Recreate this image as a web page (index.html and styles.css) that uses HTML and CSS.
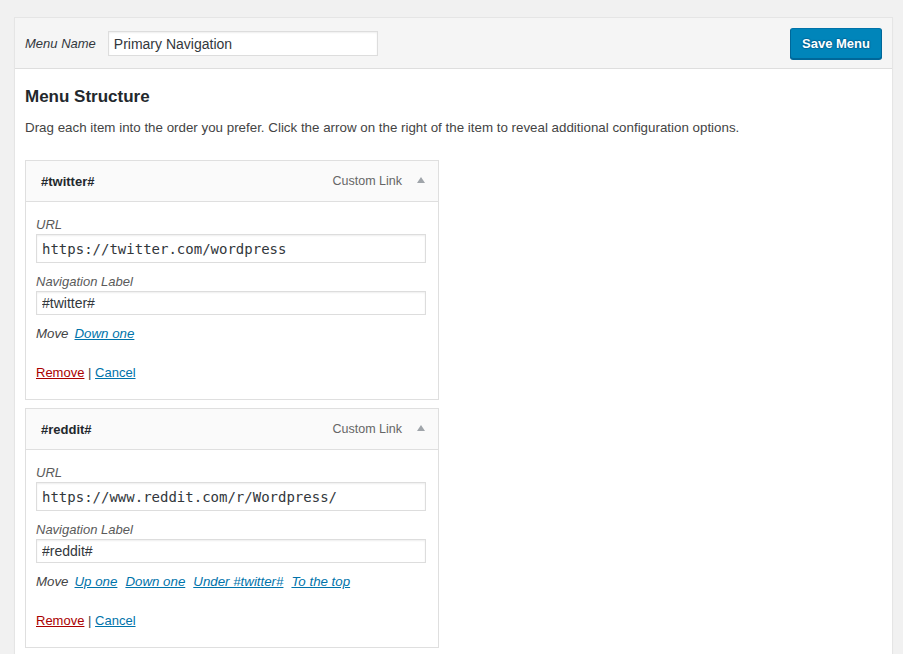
FILE: index.html
```html
<!DOCTYPE html>
<html>
<head>
<meta charset="utf-8">
<link rel="stylesheet" href="styles.css">
</head>
<body>
<div class="menu-edit">
  <div class="menu-header">
    <label class="menu-name-label">Menu Name</label>
    <input class="menu-name-input" type="text" value="Primary Navigation">
    <button class="save-btn">Save Menu</button>
  </div>
  <div class="menu-body">
    <h3 class="structure-title">Menu Structure</h3>
    <p class="structure-desc">Drag each item into the order you prefer. Click the arrow on the right of the item to reveal additional configuration options.</p>

    <div class="menu-item">
      <div class="item-bar">
        <span class="item-title">#twitter#</span>
        <span class="item-type">Custom Link</span>
        <span class="item-arrow"></span>
      </div>
      <div class="item-settings">
        <label class="field-label">URL</label>
        <input class="field-input url" type="text" value="https://twitter.com/wordpress">
        <label class="field-label spaced">Navigation Label</label>
        <input class="field-input label" type="text" value="#twitter#">
        <div class="move-row"><span class="move-label">Move</span><a href="#" class="move-link">Down one</a></div>
        <div class="actions"><a href="#" class="remove">Remove</a> <span class="sep">|</span> <a href="#" class="cancel">Cancel</a></div>
      </div>
    </div>

    <div class="menu-item">
      <div class="item-bar">
        <span class="item-title">#reddit#</span>
        <span class="item-type">Custom Link</span>
        <span class="item-arrow"></span>
      </div>
      <div class="item-settings">
        <label class="field-label">URL</label>
        <input class="field-input url" type="text" value="https://www.reddit.com/r/Wordpress/">
        <label class="field-label spaced">Navigation Label</label>
        <input class="field-input label" type="text" value="#reddit#">
        <div class="move-row"><span class="move-label">Move</span><a href="#" class="move-link">Up one</a><a href="#" class="move-link">Down one</a><a href="#" class="move-link">Under #twitter#</a><a href="#" class="move-link">To the top</a></div>
        <div class="actions"><a href="#" class="remove">Remove</a> <span class="sep">|</span> <a href="#" class="cancel">Cancel</a></div>
      </div>
    </div>
  </div>
</div>
</body>
</html>
```

FILE: styles.css
```css
html, body {
  margin: 0;
  padding: 0;
}
body {
  background: #f1f1f1;
  font-family: "Liberation Sans", Arial, sans-serif;
  font-size: 13px;
  color: #444;
  padding: 17px 10px 40px 14px;
}
.menu-edit {
  border: 1px solid #e5e5e5;
  background: #fff;
  box-shadow: 0 1px 1px rgba(0,0,0,.04);
}
.menu-header {
  display: flex;
  align-items: center;
  background: #f5f5f5;
  border-bottom: 1px solid #dedede;
  padding: 10px 10px 9px 10px;
}
.menu-name-label {
  font-style: italic;
  color: #32373c;
  font-size: 13px;
  margin-right: 12px;
}
.menu-name-input {
  width: 270px;
  height: 25px;
  box-sizing: border-box;
  border: 1px solid #ddd;
  box-shadow: inset 0 1px 2px rgba(0,0,0,.07);
  background: #fff;
  font-family: "Liberation Sans", Arial, sans-serif;
  font-size: 14px;
  color: #32373c;
  padding: 0 6px 0 5px;
  margin: 0;
  outline: none;
}
.save-btn {
  margin-left: auto;
  height: 31px;
  width: 92px;
  box-sizing: border-box;
  background: #0085ba;
  border: 1px solid #0073aa;
  border-color: #0073aa #006799 #006799;
  border-radius: 3px;
  box-shadow: 0 1px 0 #006799;
  color: #fff;
  font-family: "Liberation Sans", Arial, sans-serif;
  font-size: 13px;
  font-weight: 600;
  text-shadow: 0 -1px 1px #006799, 1px 0 1px #006799, 0 1px 1px #006799, -1px 0 1px #006799;
  padding: 0;
}
.menu-body {
  padding: 18px 10px 30px 10px;
}
.structure-title {
  margin: 0;
  font-size: 17px;
  line-height: 20px;
  font-weight: bold;
  color: #23282d;
}
.structure-desc {
  margin: 12px 0 23px 0;
  line-height: 18px;
  font-size: 13.35px;
  color: #444;
}
.menu-item {
  width: 414px;
  box-sizing: border-box;
  border: 1px solid #dfdfdf;
  margin-bottom: 8px;
  background: #fff;
}
.item-bar {
  display: flex;
  align-items: center;
  height: 40px;
  background: #fafafa;
  border-bottom: 1px solid #dfdfdf;
  padding: 0 13px 0 15px;
}
.item-title {
  font-weight: bold;
  color: #23282d;
  font-size: 13px;
}
.item-type {
  margin-left: auto;
  color: #666;
  font-size: 12.5px;
}
.item-arrow {
  width: 0;
  height: 0;
  border-left: 4px solid transparent;
  border-right: 4px solid transparent;
  border-bottom: 6px solid #a0a5aa;
  margin-left: 15px;
  margin-top: -2px;
}
.item-settings {
  padding: 14px 12px 17px 10px;
}
.field-label {
  display: block;
  font-style: italic;
  color: #5a5a5a;
  line-height: 18px;
  font-size: 13px;
}
.field-label.spaced {
  margin-top: 10px;
}
.field-input {
  display: block;
  width: 390px;
  box-sizing: border-box;
  border: 1px solid #ddd;
  box-shadow: inset 0 1px 2px rgba(0,0,0,.07);
  background: #fff;
  color: #32373c;
  margin: 0;
  padding: 0 5px;
  outline: none;
}
.field-input.url {
  height: 29px;
  font-family: "DejaVu Sans Mono", "Liberation Mono", monospace;
  font-size: 14px;
}
.field-input.label {
  height: 24px;
  font-family: "Liberation Sans", Arial, sans-serif;
  font-size: 14px;
}
.move-row {
  margin-top: 10px;
  line-height: 18px;
  display: flex;
  gap: 8px;
}
.move-label {
  font-style: italic;
  color: #444;
  margin-right: -2px;
  font-size: 13.3px;
}
.move-link {
  font-style: italic;
  color: #0073aa;
  text-decoration: underline;
  font-size: 13.3px;
}
.actions {
  margin-top: 21px;
  line-height: 18px;
  color: #444;
}
.remove {
  color: #a00;
  text-decoration: underline;
}
.cancel {
  color: #0073aa;
  text-decoration: underline;
}
```
